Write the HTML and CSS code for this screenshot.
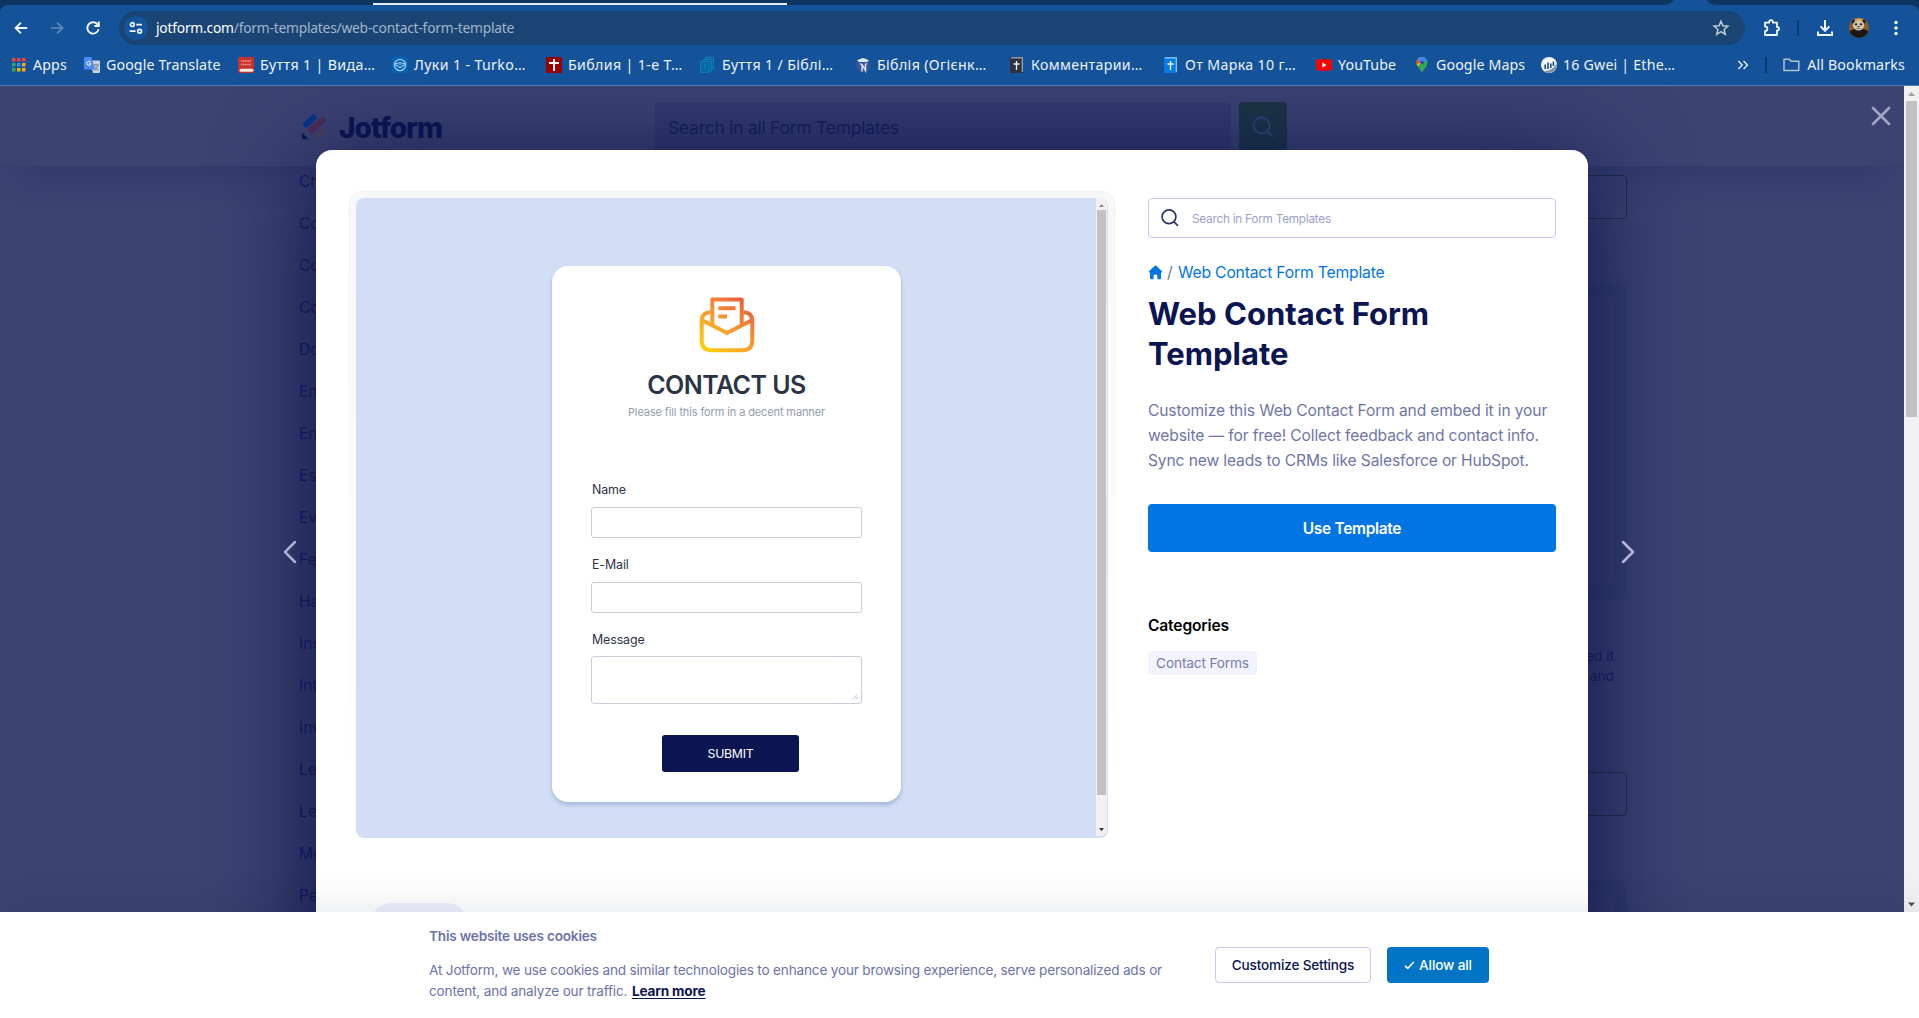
FILE: index.html
```html
<!DOCTYPE html>
<html lang="en">
<head>
<meta charset="utf-8">
<title>Web Contact Form Template | Jotform</title>
<link rel="stylesheet" href="styles.css">
</head>
<body>
<div class="browser">
  <div class="tabstrip">
    <span class="tab-group"></span>
    <svg class="active-tab" width="54" height="5" viewBox="0 0 54 5"><path d="M0 5Q7 5 10.500 0H43.500Q47 5 54 5Z" fill="#14529a"/></svg>
  </div>

  <div class="chrome">
    <div class="toolbar">
      <div class="nav">
        <svg width="20" height="20" viewBox="0 0 20 20" fill="none" stroke="#f2f5f9" stroke-width="1.900"><path d="M16.200 10H5M10 4.600 4.600 10 10 15.400"/></svg>
        <svg width="20" height="20" viewBox="0 0 20 20" fill="none" stroke="#648abb" stroke-width="1.700"><path d="M4 10H15.200M10.200 4.600 15.600 10 10.200 15.400"/></svg>
        <svg width="20" height="20" viewBox="0 0 20 20" fill="none" stroke="#f2f5f9" stroke-width="1.900"><path d="M15.600 11.200A5.700 5.700 0 1 1 14.200 6L15.600 7.600M15.800 3.600V8H11.400"/></svg>
      </div>
      <div class="omnibox">
        <span class="site-info">
          <svg width="16" height="16" viewBox="0 0 16 16" fill="none" stroke="#eef3f8" stroke-width="1.700"><circle cx="4.300" cy="4.600" r="1.900"/><path d="M8.200 4.600H14M1.500 11.200H7.600"/><circle cx="11.600" cy="11.200" r="1.900"/></svg>
        </span>
        <span class="url"><b>jotform.com</b>/form-templates/web-contact-form-template</span>
        <svg class="star" width="18" height="18" viewBox="0 0 18 18" fill="none" stroke="#c3cbd3" stroke-width="1.500"><path d="M9 2.200 10.900 6.800 15.900 7.200 12.100 10.400 13.300 15.300 9 12.700 4.700 15.300 5.900 10.400 2.100 7.200 7.100 6.800Z"/></svg>
      </div>
      <div class="actions">
        <svg class="ext" width="20" height="20" viewBox="0 0 20 20" fill="none" stroke="#f4f7fb" stroke-width="1.800" stroke-linejoin="round"><path d="M3 4.600H7.200V4A1.800 1.800 0 0 1 10.800 4V4.600H15V9H15.400A1.700 1.700 0 0 1 15.400 12.400H15V17H3V13.200A2.400 2.400 0 0 0 3 8.400Z"/></svg>
        <span class="sep"></span>
        <svg class="dl" width="18" height="18" viewBox="0 0 18 18" fill="none" stroke="#f4f7fb" stroke-width="2"><path d="M9 1V11.600M4.600 7.400 9 11.800 13.400 7.400M2 12.600V16H16V12.600"/></svg>
        <svg class="avatar" width="20" height="20" viewBox="0 0 20 20"><defs><clipPath id="av"><circle cx="10" cy="10" r="10"/></clipPath></defs><g clip-path="url(#av)"><rect width="20" height="20" fill="#8a5c24"/><path d="M0 0H20V4.500H0Z" fill="#d9983a"/><ellipse cx="10" cy="18.500" rx="12" ry="8" fill="#1d1611"/><circle cx="4.300" cy="3.600" r="2" fill="#241b14"/><circle cx="15.300" cy="3.300" r="2" fill="#241b14"/><ellipse cx="9.600" cy="7.300" rx="5.600" ry="5.200" fill="#d3c6ac"/><ellipse cx="7" cy="6.300" rx="1.300" ry="1.100" fill="#2a211b"/><ellipse cx="12" cy="6.300" rx="1.300" ry="1.100" fill="#2a211b"/><ellipse cx="9.500" cy="8.600" rx="1.200" ry=".7" fill="#2a211b"/><path d="M7.500 10.400Q9.600 11.300 11.600 10.300" stroke="#5a4a3c" stroke-width=".7" fill="none"/></g></svg>
        <svg class="dots" width="6" height="16" viewBox="0 0 6 16" fill="#fff"><circle cx="3" cy="2.500" r="1.700"/><circle cx="3" cy="8" r="1.700"/><circle cx="3" cy="13.500" r="1.700"/></svg>
      </div>
    </div>

    <div class="bookmarks">
      <div class="bm-list">
        <a><svg width="15" height="16" viewBox="0 0 15 16"><path fill="#f0443a" d="M0 1h3.500v3.500H0zM5 1h3.500v3.500H5zM10 1h3.500v3.500H10z"/><path fill="#35a853" d="M0 6h3.500v3.500H0zM0 11h3.500v3.500H0z"/><path fill="#3b8df2" d="M5 6h3.500v3.500H5z"/><path fill="#f9ab0c" d="M10 6h3.500v3.500H10zM5 11h3.500v3.500H5zM10 11h3.500v3.500H10z"/></svg><span>Apps</span></a>
        <a><svg width="16" height="16" viewBox="0 0 16 16"><path fill="#c9d2dd" d="M6 3.500H15a1 1 0 0 1 1 1V15a1 1 0 0 1-1 1H9Z"/><path d="M9.500 8H15M12 6.800V8M10 13.500Q13.500 12 13.800 8M10.600 9.500Q12 12.500 14.500 13.400" stroke="#66768c" stroke-width=".9" fill="none"/><path fill="#4c8bf5" d="M1 0H7.500L11 12.500H1a1 1 0 0 1-1-1V1a1 1 0 0 1 1-1Z"/><path d="M6.600 5.200A2 2 0 1 0 6.900 6.800H5" stroke="#fff" stroke-width="1" fill="none"/></svg><span>Google Translate</span></a>
        <a><svg width="16" height="16" viewBox="0 0 16 16"><rect width="16" height="16" rx="2" fill="#c9322c"/><rect x="1.500" y="11.800" width="14" height="3" rx="1.500" fill="#f4e9e4"/><path d="M3 4H13M3 7.500H13" stroke="#e9a49a" stroke-width="1.600" stroke-dasharray="1.400 .7"/></svg><span>Буття 1 | Вида…</span></a>
        <a><svg width="16" height="16" viewBox="0 0 16 16" fill="none"><rect width="16" height="16" rx="2" fill="#0563b4"/><circle cx="8" cy="8" r="5.600" stroke="#9fc6ea" stroke-width="1.400"/><path d="M2.500 7 8 11 13.500 7 8 5.600Z" stroke="#a9cdee" fill="#2c7cc6"/></svg><span>Луки 1 - Turko…</span></a>
        <a><svg width="16" height="16" viewBox="0 0 16 16"><rect width="16" height="16" fill="#990000"/><path d="M8 2V14M3 6H13" stroke="#fff" stroke-width="2"/></svg><span>Библия | 1-е Т…</span></a>
        <a><svg width="16" height="16" viewBox="0 0 16 16" fill="#0c65a5" stroke="#0980b2"><path d="M5.500.5H13.500V12H5.500Z"/><path d="M3.500 2.500H11.500V14H3.500Z"/><path d="M.5 4.500H9V15.500H.5Z"/><path d="M4.800 7V13M2.600 9H7"/></svg><span>Буття 1 / Біблі…</span></a>
        <a><svg width="16" height="16" viewBox="0 0 16 16"><circle cx="8" cy="8.500" r="7" fill="#37569a"/><path d="M2 3.500Q5 1.500 8 1Q11 1.500 14 3.500L12 5H4Z" fill="#dfe7f0"/><path d="M5 6.500 7 8V14.500M7 7.500 10.500 13.500V7.500L12 6.500" stroke="#d4deea" stroke-width="1.500" fill="none"/></svg><span>Біблія (Огієнк…</span></a>
        <a><svg width="16" height="16" viewBox="0 0 16 16"><path d="M1 0H14V16H1Z" fill="#2d3140"/><path d="M2 .8H13.300V15" stroke="#a9adb5" stroke-width="1.200" fill="none"/><path d="M7.500 4V13M4.500 7H10.500" stroke="#f4f4f4" stroke-width="1.300"/></svg><span>Комментарии…</span></a>
        <a><svg width="16" height="16" viewBox="0 0 16 16"><path d="M1 0H14V16H1Z" fill="#067be6"/><path d="M2 .8H13.300V15" stroke="#96cbfa" stroke-width="1.200" fill="none"/><path d="M7.500 4V13M4.500 7H10.500" stroke="#fff" stroke-width="1.300"/></svg><span>От Марка 10 г…</span></a>
        <a><svg width="16" height="16" viewBox="0 0 16 16"><rect y="2.200" width="16" height="11.600" rx="2.800" fill="#f00"/><path d="M6.400 5.600 10.600 8 6.400 10.400Z" fill="#fff"/></svg><span>YouTube</span></a>
        <a><svg width="16" height="16" viewBox="0 0 16 16"><path d="M8 16C7.300 13 2.500 10 2.500 5.500A5.500 5.500 0 0 1 13.500 5.500C13.500 10 8.700 13 8 16Z" fill="#34a853"/><path d="M2.500 5.500A5.500 5.500 0 0 1 8 0V5.500L3.800 9.300Q2.500 7.500 2.500 5.500Z" fill="#fbbc04"/><path d="M3.600 2.200 6.500 5 2.800 7.200Q2 4.400 3.600 2.200Z" fill="#ea4335"/><path d="M3.600 2.200A5.500 5.500 0 0 1 13 3.400L9.500 5.200 6.500 5Z" fill="#4285f4"/><circle cx="8" cy="5.500" r="1.900" fill="#1a57b8"/></svg><span>Google Maps</span></a>
        <a><svg width="16" height="16" viewBox="0 0 16 16"><circle cx="8" cy="8" r="8" fill="#f5f8fb"/><path d="M15.700 6.500Q12 13.500 3 14.200A8 8 0 0 0 15.700 6.500Z" fill="#8794a5"/><path d="M4.200 7.500V12M7 5.500V12M9.800 6.500V11M12.400 4.500V9" stroke="#174a86" stroke-width="1.600"/></svg><span>16 Gwei | Ethe…</span></a>
      </div>
      <div class="bm-end">
        <svg width="12" height="12" viewBox="0 0 12 12" fill="none" stroke="#dfe8f2" stroke-width="1.500"><path d="M1.400 2 5.200 6 1.400 10M6.600 2 10.400 6 6.600 10"/></svg>
        <span class="sep"></span>
        <svg width="17" height="14" viewBox="0 0 17 14" fill="none" stroke="#b7c2ce" stroke-width="1.500" stroke-linejoin="round"><path d="M1 2.800V12.600H15.800V3.200H8L6.400 1.200H1Z"/></svg>
        <span>All Bookmarks</span>
      </div>
    </div>
  </div>

  <div class="viewport">
    <div class="page">
      <header class="site-header">
        <a class="logo">
          <svg width="25" height="26" viewBox="0 0 25 26" fill="none" stroke-linecap="round" stroke-width="6"><path d="M4 10.500 11.500 3.500" stroke="#07358a"/><path d="M9.500 16.300 20.500 6" stroke="#522a55"/><path d="M15.500 22 20.300 17.500" stroke="#4b405c"/><path d="M0 18.500 6.500 25.200H1.300Q0 25.200 0 24Z" fill="#0a1551"/></svg>
          <span>Jotform</span>
        </a>
        <div class="site-search">Search in all Form Templates</div>
        <div class="site-search-btn">
          <svg width="24" height="24" viewBox="0 0 24 24" fill="none" stroke="#36457a" stroke-width="2"><circle cx="10.500" cy="10.500" r="8"/><path d="M16.500 16.500 22 22"/></svg>
        </div>
      </header>
      <div class="site-body">
        <ul class="side-list">
          <li>Ch</li><li>Co</li><li>Co</li><li>Co</li><li>Do</li><li>En</li><li>En</li><li>Es</li><li>Ev</li><li>Fe</li><li>Ha</li><li>Ins</li><li>Int</li><li>Inv</li><li>Le</li><li>Le</li><li>Me</li><li>Pe</li>
        </ul>
        <div class="results">
          <div class="ghost-btn"></div>
          <div class="ghost-card"><div></div></div>
          <p class="ghost-text"><span>ed it</span><span>and</span></p>
          <div class="ghost-btn"></div>
          <div class="ghost-card"><div></div></div>
        </div>
      </div>
    </div>

    <div class="lightbox">
      <div class="modal">
        <div class="stage">
          <div class="preview-frame">
            <div class="preview">
              <div class="canvas">
                <div class="form-card">
                  <svg width="56" height="56" viewBox="0 0 56 56" fill="none" stroke-width="4"><defs><linearGradient id="mail" x1="8" y1="52" x2="46" y2="4" gradientUnits="userSpaceOnUse"><stop offset="0" stop-color="#fdcb0a"/><stop offset=".5" stop-color="#f69a33"/><stop offset="1" stop-color="#eb5d3a"/></linearGradient></defs><g stroke="url(#mail)"><path d="M13.300 29V2.600H42.700V29" stroke-linejoin="round"/><path d="M11.500 15.300Q3 15.800 2.700 23V44Q3 53 12 53.200H44Q53 53 53.300 44V23Q53 15.800 44.500 15.300"/><path d="M2.700 23 28 36 53.300 23"/><path d="M19.300 11.300H36.500M19.300 19.500H28"/></g></svg>
                  <h2>CONTACT US</h2>
                  <p class="sub">Please fill this form in a decent manner</p>
                  <label>Name</label><div class="field"></div>
                  <label>E-Mail</label><div class="field"></div>
                  <label>Message</label><div class="field area"><svg width="6" height="6" viewBox="0 0 6 6" stroke="#a9adb8" stroke-width=".8"><path d="M.5 5.500 5 .5M3.500 5.500 5.500 3"/></svg></div>
                  <div class="submit">SUBMIT</div>
                </div>
              </div>
              <div class="pscroll">
                <svg width="12" height="13" viewBox="0 0 12 13"><path d="M3 9 5.500 6 8 9Z" fill="#8b8b8b"/></svg>
                <div class="pthumb"></div>
                <svg width="12" height="13" viewBox="0 0 12 13"><path d="M3 5 5.500 8.200 8 5Z" fill="#3c3c3c"/></svg>
              </div>
            </div>
          </div>
          <div class="next-pill"></div>
        </div>
        <aside class="info">
          <div class="search">
            <svg width="18" height="18" viewBox="0 0 18 18" fill="none" stroke="#2c3565" stroke-width="1.700"><circle cx="8" cy="7.800" r="6.900"/><path d="M12.600 12.400 17 16.800"/></svg>
            <span>Search in Form Templates</span>
          </div>
          <div class="crumbs">
            <svg width="15" height="15" viewBox="0 0 15 15" fill="#0075e3"><path d="M7.500.5Q8 .5 8.400.9L14 6.300Q14.600 7.200 13.600 7.500H13V13Q13 14.200 11.800 14.200H9.400V10.800Q9.300 9.500 7.500 9.500T5.600 10.800V14.200H3.200Q2 14.200 2 13V7.500H1.400Q.4 7.200 1 6.300L6.600.9Q7 .5 7.500.5Z"/></svg>
            <i>/</i><a>Web Contact Form Template</a>
          </div>
          <h1>Web Contact Form<br>Template</h1>
          <p class="desc">Customize this Web Contact Form and embed it in your<br>website — for free! Collect feedback and contact info.<br>Sync new leads to CRMs like Salesforce or HubSpot.</p>
          <a class="use">Use Template</a>
          <h3>Categories</h3>
          <a class="tag">Contact Forms</a>
        </aside>
      </div>
      <svg class="close" width="20" height="20" viewBox="0 0 20 20" stroke="#a2a6c0" stroke-width="2.600" stroke-linecap="round"><path d="M2 2 18 18M18 2 2 18"/></svg>
      <svg class="arrow prev" width="14" height="24" viewBox="0 0 14 24" fill="none" stroke="#a9afd0" stroke-width="2.500" stroke-linecap="round" stroke-linejoin="round"><path d="M12 2 2 12 12 22"/></svg>
      <svg class="arrow next" width="14" height="24" viewBox="0 0 14 24" fill="none" stroke="#b1b7d8" stroke-width="2.500" stroke-linecap="round" stroke-linejoin="round"><path d="M2 2 12 12 2 22"/></svg>
    </div>

    <div class="vscroll">
      <svg width="15" height="15" viewBox="0 0 15 15"><path d="M4 10 7.500 6 11 10Z" fill="#a3a3a3"/></svg>
      <div class="vthumb"></div>
      <svg width="15" height="15" viewBox="0 0 15 15"><path d="M4 5.500 7.500 9.500 11 5.500Z" fill="#505050"/></svg>
    </div>
  </div>

  <div class="cookies">
    <div class="cookie-text">
      <strong>This website uses cookies</strong>
      <p>At Jotform, we use cookies and similar technologies to enhance your browsing experience, serve personalized ads or<br>content, and analyze our traffic. <a>Learn more</a></p>
    </div>
    <div class="cookie-btns">
      <a class="customize">Customize Settings</a>
      <a class="allow"><svg width="11" height="9" viewBox="0 0 11 9" fill="none" stroke="#fff" stroke-width="1.600"><path d="M1 4.800 3.800 7.400 9.800 1"/></svg><span>Allow all</span></a>
    </div>
  </div>
</div>
</body>
</html>
```
FILE: styles.css
```css
* { box-sizing: border-box; margin: 0; padding: 0; }
body { font-family: Inter, "Noto Sans", sans-serif; overflow: hidden; }
svg { display: block; flex: none; }

.browser { display: flex; flex-direction: column; width: 1919px; height: 1018px; overflow: hidden; background: #0c3560; }

/* browser chrome */
.tabstrip { display: flex; justify-content: space-between; height: 5px; flex: none; padding: 0 202px 0 373px; }
.tab-group { width: 414px; height: 2px; margin-top: 3px; background: #e4ebf1; }
.chrome { height: 81px; flex: none; background: #14529a; border-radius: 8px 8px 0 0; border-bottom: 1px solid #4b7fbb; font-family: "Noto Sans", sans-serif; color: #eef3f9; }
.toolbar { display: flex; height: 45px; padding: 6px 0 0 11px; }
.nav { display: flex; gap: 16px; padding-top: 7px; width: 108px; }
.omnibox { display: flex; align-items: center; width: 1626px; height: 34px; padding: 0 15px 0 5px; border-radius: 17px; background: #194474; }
.site-info { display: grid; place-items: center; width: 24px; height: 24px; border-radius: 50%; background: #14529a; }
.url { flex: 1; padding: 0 0 2px 8px; font-size: 13.8px; letter-spacing: -.22px; color: #a3b5c9; white-space: nowrap; }
.url b { font-weight: 400; color: #fff; }
.actions { display: flex; align-items: center; height: 34px; padding-left: 17px; }
.sep { width: 2px; height: 16px; background: #0d3a6e; }
.ext { margin-right: 15px; }
.dl { margin: 0 15px 0 17px; }
.avatar { margin-right: 24px; }

.bookmarks { display: flex; justify-content: space-between; align-items: center; height: 29px; padding: 0 14px 0 12px; font-size: 14.200px; white-space: nowrap; }
.bm-list { display: grid; grid-template-columns: 72px 154px 154px 154px 154px 155px 154px 154px 153px 98px 127px 134px; letter-spacing: .36px; }
.bm-list a { display: flex; align-items: center; gap: 6px; }
.bm-list span, .bm-end span:last-child { position: relative; padding-bottom: 1px; }
.bm-list a:nth-child(2), .bm-list a:nth-child(10), .bm-list a:nth-child(11), .bm-list a:nth-child(1) { letter-spacing: .12px; }
.bm-list a:last-child { letter-spacing: .2px; }
.bm-end { display: flex; align-items: center; letter-spacing: .18px; }
.bm-end .sep { margin: 0 16px; }
.bm-end span:last-child { margin-left: 7px; }

/* dimmed page behind the lightbox */
.viewport { position: relative; height: 826px; flex: none; background: #3c4373; overflow: hidden; }
.page { width: 1904px; height: 826px; }
.site-header { display: flex; height: 80px; padding: 16px 0 0 302px; background: #3c4373; box-shadow: 0 24px 36px -20px rgba(10, 22, 80, .3); position: relative; }
.logo { display: flex; gap: 12px; width: 353px; padding-top: 12px; }
.logo span { font-size: 28px; line-height: 28px; font-weight: 800; letter-spacing: -.95px; color: #0a1551; }
.site-search { width: 576px; height: 50px; padding-left: 13px; border-radius: 4px; background: #333b70; font-size: 17.500px; line-height: 51px; letter-spacing: -.26px; color: #151f5b; }
.site-search-btn { display: grid; place-items: center; width: 48px; height: 50px; margin-left: 8px; border-radius: 4px; background: #1c3645; }
.site-body { display: flex; justify-content: space-between; padding: 0 277px 0 299px; }
.side-list { list-style: none; margin-top: -5px; font-size: 15.500px; line-height: 42px; color: #141f63; }
.results { width: 400px; padding-top: 9px; }
.ghost-btn { height: 44px; border: 1px solid #18303f; border-radius: 4px; }
.ghost-card { height: 317px; margin-top: 64px; padding: 13px; border-radius: 8px; background: #354070; }
.ghost-card div { height: 291px; border-radius: 8px; background: #3a4272; }
.ghost-text { display: flex; flex-direction: column; align-items: flex-end; height: 108px; padding: 46px 13px 0 0; font-size: 13.600px; line-height: 20px; color: #141f63; }
.results .ghost-text + .ghost-btn { margin-top: 64px; }

/* lightbox */
.lightbox { position: absolute; inset: 0 15px 0 0; }
.modal { position: absolute; left: 316px; top: 64px; width: 1272px; height: 900px; display: flex; gap: 32px; padding: 40px 32px 0; border-radius: 16px; background: #fff; box-shadow: 0 16px 100px #0a1148; }
.close { position: absolute; left: 1871px; top: 20px; }
.arrow { position: absolute; top: 454px; }
.prev { left: 283px; }
.next { left: 1621px; }

.stage { flex: none; width: 768px; }
.preview-frame { height: 656px; padding: 8px; border-radius: 16px; background: linear-gradient(#f7f7f7, #fff 95%); }
.preview { display: flex; height: 640px; border-radius: 8px; overflow: hidden; border: 1px solid #d2def6; border-width: 0 1px 2px 0; background: #f1f1f3; }
.canvas { flex: 1; padding: 68px 0 0 196px; background: #d2def6; }
.form-card { display: flex; flex-direction: column; align-items: center; width: 349px; height: 536px; padding: 31px 0 0; border-radius: 16px; background: #fff; box-shadow: 0 3px 4px rgba(120, 145, 190, .5); color: #2c3345; }
.form-card h2 { margin-top: 17px; font-size: 25px; line-height: 30px; font-weight: 600; letter-spacing: -.55px; }
.sub { margin-top: 5px; font-size: 11px; line-height: 14px; letter-spacing: -.12px; color: #949bad; }
.form-card label { align-self: flex-start; margin-left: 40px; font-size: 12.400px; line-height: 16px; letter-spacing: -.1px; }
.form-card .sub + label { margin-top: 63px; }
.field { width: 271px; height: 31px; margin: 9px 0 19px; border: 1px solid #cbccd8; border-radius: 3px; }
.area { display: flex; align-items: flex-end; justify-content: flex-end; height: 48px; padding: 3px; margin: 8px 0 31px; }
.submit { width: 137px; height: 37px; margin-left: 8px; border-radius: 3px; background: #0a1551; color: #fff; font-size: 12.300px; line-height: 37px; letter-spacing: -.25px; text-align: center; }
.pscroll { display: flex; flex-direction: column; width: 11px; background: #f1f1f1; }
.pthumb { flex: 1; width: 9px; margin: -1px 0 28px 1px; background: #c1c1c1; }
.next-pill { width: 96px; height: 40px; margin: 57px 0 0 23px; border-radius: 20px; background: #f0effc; }

.info { width: 408px; padding-top: 8px; }
.search { display: flex; align-items: center; height: 40px; padding-left: 12px; gap: 13px; border: 1px solid #c5caee; border-radius: 4px; font-size: 11.800px; letter-spacing: -.25px; color: #9a9fca; }
.search span { padding-top: 2px; }
.crumbs { display: flex; align-items: center; height: 20px; margin-top: 24px; font-size: 15.700px; letter-spacing: -.18px; color: #0075e3; white-space: nowrap; }
.crumbs i { width: 15px; padding-left: 4px; font-style: normal; color: #6f76a7; }
h1 { margin-top: 12px; font-size: 31px; line-height: 40px; font-weight: 700; letter-spacing: 0; color: #0a1551; }
.desc { margin-top: 24px; font-size: 15.600px; line-height: 25px; letter-spacing: -.13px; color: #6f76a7; white-space: nowrap; }
.use { display: block; height: 48px; margin-top: 31px; border-radius: 4px; background: #0075e3; color: #fff; font-size: 15.500px; line-height: 50px; font-weight: 600; letter-spacing: -.32px; text-align: center; }
h3 { margin-top: 64px; font-size: 15.600px; line-height: 20px; font-weight: 600; letter-spacing: -.16px; color: #000; }
.tag { display: inline-block; width: 109px; height: 24px; margin-top: 15px; border-radius: 4px; background: #f3f3fe; color: #777dae; font-size: 13.700px; line-height: 24px; letter-spacing: -.17px; text-align: center; }

/* page scrollbar */
.vscroll { position: absolute; top: 0; right: 0; display: flex; flex-direction: column; width: 15px; height: 826px; background: #f1f1f1; }
.vthumb { width: 11px; height: 316px; margin: 0 0 auto 2px; background: #c1c1c1; }

/* cookie bar */
.cookies { position: relative; display: flex; flex: 1; padding: 14px 0 0 429px; background: #fff; box-shadow: 0 0 40px rgba(10, 21, 51, .13); color: #6c73a8; }
.cookie-text { width: 786px; font-size: 13.600px; }
.cookie-text strong { display: block; font-weight: 600; line-height: 20px; letter-spacing: -.19px; }
.cookie-text p { margin-top: 14px; line-height: 21px; letter-spacing: -.187px; white-space: nowrap; }
.cookie-text a { font-weight: 700; letter-spacing: -.15px; color: #0a1551; text-decoration: underline; text-underline-offset: 2px; margin-left: 1px; }
.cookie-btns { display: flex; gap: 16px; padding-top: 21px; font-size: 13.600px; font-weight: 500; }
.cookie-btns a { display: flex; align-items: center; justify-content: center; height: 36px; border-radius: 4px; }
.customize { width: 156px; border: 1px solid #c5caee; color: #0a1551; letter-spacing: -.18px; }
.allow { width: 102px; gap: 4px; background: #0075c5; color: #fff; letter-spacing: -.12px; }
```
